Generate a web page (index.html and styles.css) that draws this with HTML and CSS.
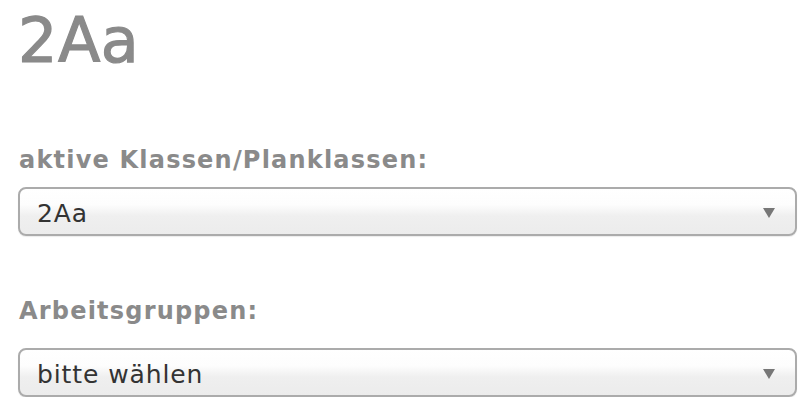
FILE: index.html
```html
<!DOCTYPE html>
<html lang="de">
<head>
<meta charset="utf-8">
<title>2Aa</title>
<link rel="stylesheet" href="styles.css">
</head>
<body>
<main class="page">
  <h1 class="title">2Aa</h1>
  <section class="field field-first">
    <label class="label">aktive Klassen/Planklassen:</label>
    <div class="select"><span class="select-text">2Aa</span><span class="arrow"></span></div>
  </section>
  <section class="field field-second">
    <label class="label">Arbeitsgruppen:</label>
    <div class="select"><span class="select-text">bitte wählen</span><span class="arrow"></span></div>
  </section>
</main>
</body>
</html>
```
FILE: styles.css
```css
html, body {
  margin: 0;
  padding: 0;
  background: #ffffff;
}
body {
  font-family: "DejaVu Sans", sans-serif;
}
.page {
  display: flex;
  flex-direction: column;
  padding: 0 12px 0 18px;
}
.title {
  margin: 6px 0 0 0;
  font-size: 62px;
  line-height: 70px;
  font-weight: normal;
  color: #8a8a8a;
  letter-spacing: 0.5px;
  -webkit-text-stroke: 1.2px #8a8a8a;
}
.field {
  display: flex;
  flex-direction: column;
}
.field-first {
  margin-top: 69px;
}
.field-second {
  margin-top: 60px;
}
.label {
  font-size: 24px;
  line-height: 30px;
  font-weight: bold;
  color: #8a8a8a;
  padding-left: 1px;
  letter-spacing: 1.2px;
}
.field-first .select {
  margin-top: 12px;
}
.field-second .select {
  margin-top: 22px;
}
.select {
  height: 45px;
  border: 2px solid #ababab;
  border-radius: 8px;
  background: linear-gradient(to bottom, #ffffff 0%, #fdfdfd 35%, #efefef 60%, #ececec 100%);
  box-shadow: 0 1px 1px rgba(0,0,0,0.08);
  display: flex;
  align-items: center;
  justify-content: space-between;
  padding: 0 20px 0 17px;
}
.select-text {
  font-size: 25px;
  line-height: 45px;
  color: #333333;
  padding-top: 3px;
  letter-spacing: 0.9px;
}
.arrow {
  width: 0;
  height: 0;
  border-left: 6px solid transparent;
  border-right: 6px solid transparent;
  border-top: 10px solid #777777;
  margin-top: 3px;
}
```
